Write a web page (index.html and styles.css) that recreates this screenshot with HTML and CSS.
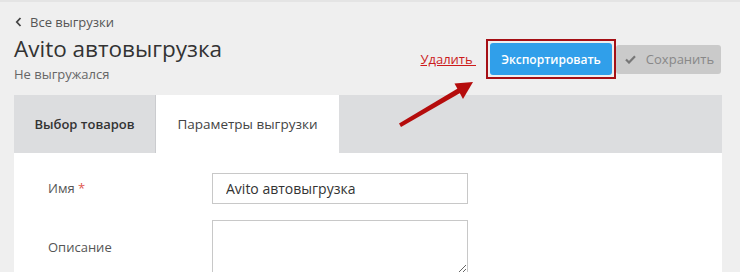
FILE: index.html
```html
<!DOCTYPE html>
<html lang="ru">
<head>
<meta charset="utf-8">
<link rel="stylesheet" href="styles.css">
</head>
<body>
<div class="page">
  <header class="header">
    <div class="titles">
      <a class="back" href="#"><svg class="chev" width="7" height="10" viewBox="0 0 7 10"><path d="M5.5 1 L1.8 5 L5.5 9" fill="none" stroke="#444" stroke-width="1.8"/></svg>Все выгрузки</a>
      <h1 class="title">Avito автовыгрузка</h1>
      <div class="status">Не выгружался</div>
    </div>
    <div class="actions">
      <a class="delete" href="#">Удалить </a>
      <div class="frame"><button class="btn-export">Экспортировать</button></div>
      <button class="btn-save"><svg width="11" height="9" viewBox="0 0 11 9"><path d="M1 4.5 L4 7.5 L10 1.2" fill="none" stroke="#777" stroke-width="2.2"/></svg>Сохранить</button>
    </div>
  </header>
  <section class="panel">
    <nav class="tabs">
      <div class="tab">Выбор товаров</div>
      <div class="tab active">Параметры выгрузки</div>
    </nav>
    <div class="content">
      <div class="row">
        <label class="label">Имя <span class="req">*</span></label>
        <input class="input" type="text" value="Avito автовыгрузка">
      </div>
      <div class="row">
        <label class="label label-area">Описание</label>
        <textarea class="textarea"></textarea>
      </div>
    </div>
  </section>
  <svg class="arrow" width="740" height="272" viewBox="0 0 740 272">
    <polygon points="399,123.5 401,127 461,92.5 458.5,88" fill="#b50c0c"/>
    <polygon points="454.5,83.5 473,82 463,99" fill="#b50c0c"/>
  </svg>
</div>
</body>
</html>
```

FILE: styles.css
```css
* { box-sizing: border-box; }
html, body { margin: 0; padding: 0; }
body {
  background: #efefef;
  font-family: "Open Sans", "Noto Sans", sans-serif;
  color: #333;
  width: 740px;
  height: 272px;
  overflow: hidden;
}
.page {
  position: relative;
  border-top: 2px solid #e4e4e4;
  height: 272px;
}
.header {
  display: flex;
  justify-content: space-between;
  align-items: flex-start;
  padding: 11px 19px 0 14px;
}
.titles { display: flex; flex-direction: column; }
.back {
  display: flex;
  align-items: center;
  gap: 8px;
  font-size: 13px;
  line-height: 18px;
  color: #555;
  text-decoration: none;
}
.chev { margin-left: 1px; }
.title {
  margin: 3px 0 0;
  font-size: 22.5px;
  font-weight: 400;
  line-height: 30px;
  color: #333;
}
.status {
  margin-top: 1px;
  font-size: 13px;
  line-height: 18px;
  color: #666;
}
.actions {
  display: flex;
  align-items: center;
  margin-top: 26px;
}
.delete {
  font-size: 13px;
  color: #cc1b1b;
  text-decoration: underline;
  margin-right: 10px;
  white-space: pre;
}
.frame {
  border: 2px solid #a50f15;
  padding: 2px;
  display: flex;
}
.btn-export {
  width: 122px;
  height: 32px;
  border: none;
  border-radius: 3px;
  background: #309fea;
  color: #fff;
  font-family: inherit;
  font-size: 12px;
  font-weight: 600;
  padding: 0;
}
.btn-save {
  width: 105px;
  height: 29px;
  border: none;
  border-radius: 3px;
  background: #cacaca;
  color: #888;
  font-family: inherit;
  font-size: 13px;
  display: flex;
  align-items: center;
  justify-content: center;
  gap: 10px;
  padding: 0 0 0 2px;
}
.panel {
  margin: 12px 18px 0 14px;
  background: #fff;
}
.tabs {
  display: flex;
  background: #dcdddf;
  height: 58px;
}
.tab {
  display: flex;
  align-items: center;
  justify-content: center;
  width: 141px;
  font-size: 13px;
  font-weight: 600;
  color: #333;
}
.tab.active {
  width: 184px;
  background: #fff;
  font-weight: 400;
  font-size: 13.5px;
  color: #444;
  border-left: 1px solid #cbcccf;
}
.content {
  padding: 20px 0 0 34px;
  display: flex;
  flex-direction: column;
  gap: 16px;
  height: 120px;
}
.row { display: flex; align-items: flex-start; }
.label {
  width: 164px;
  font-size: 13px;
  line-height: 31px;
  color: #555;
}
.label-area { padding-top: 12px; }
.req { color: #e0584f; }
.input {
  width: 256px;
  height: 31px;
  border: 1px solid #c8c8c8;
  padding: 0 13px;
  font-family: inherit;
  font-size: 14px;
  color: #333;
  outline: none;
}
.textarea {
  width: 256px;
  height: 54px;
  border: 1px solid #c8c8c8;
  font-family: inherit;
  font-size: 14px;
  outline: none;
  resize: vertical;
}
.arrow {
  position: absolute;
  left: 0;
  top: -2px;
  pointer-events: none;
}
```
